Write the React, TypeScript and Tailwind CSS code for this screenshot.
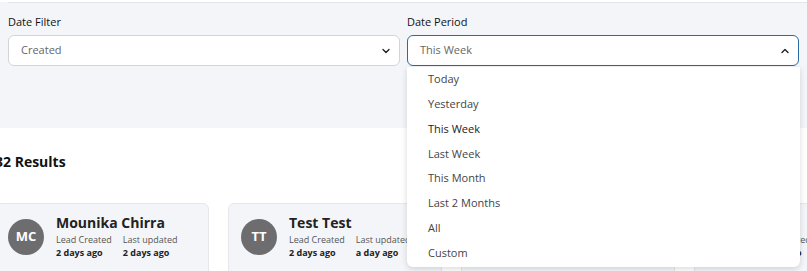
import React from 'react';
import { ChevronDown, ChevronUp } from 'lucide-react';

interface Lead {
  initials: string;
  name: string;
  created: string;
  updated: string;
}

const leads: Lead[] = [
  { initials: 'MC', name: 'Mounika Chirra', created: '2 days ago', updated: '2 days ago' },
  { initials: 'TT', name: 'Test Test', created: '2 days ago', updated: 'a day ago' },
  { initials: 'AK', name: 'Anil Kumar', created: '3 days ago', updated: '3 days ago' },
  { initials: 'RE', name: 'Renee', created: '3 days ago', updated: '2 days ago' },
];

const periods = ['Today', 'Yesterday', 'This Week', 'Last Week', 'This Month', 'Last 2 Months', 'All', 'Custom'];

const LeadCard = ({ lead }: { lead: Lead }) => (
  <div className="w-[214px] h-[90px] shrink-0 rounded-[6px] border border-[#e6e7eb] bg-[#f4f5f8] flex items-start gap-[12px] pl-[12px] pt-[9px]">
    <div className="w-[36px] h-[36px] mt-[6px] rounded-full bg-[#6d6d70] text-white text-[13px] font-bold flex items-center justify-center">
      {lead.initials}
    </div>
    <div className="flex flex-col">
      <span className="text-[14px] font-bold leading-[20px] text-[#222]">{lead.name}</span>
      <div className="flex gap-[11px]">
        <div className="flex flex-col">
          <span className="text-[9px] leading-[13px] text-[#555]">Lead Created</span>
          <span className="text-[9px] leading-[13px] font-bold text-[#222]">{lead.created}</span>
        </div>
        <div className="flex flex-col">
          <span className="text-[9px] leading-[13px] text-[#555]">Last updated</span>
          <span className="text-[9px] leading-[13px] font-bold text-[#222]">{lead.updated}</span>
        </div>
      </div>
    </div>
  </div>
);

const App = () => {
  return (
    <div className="relative w-[807px] h-[271px] overflow-hidden bg-white font-['Open_Sans',sans-serif]">
      {/* Filters */}
      <div className="h-[126px] bg-[#f4f5f8] pl-2 pr-2">
        <div className="mt-[2px] mr-[-8px] h-px bg-[#e3e4e9]" />
        <div className="grid grid-cols-2 gap-[7px] mt-[11px]">
          <div className="flex flex-col">
            <label className="text-[11px] leading-[16px] text-[#111]">Date Filter</label>
            <div className="mt-[5px] h-[31px] rounded-[6px] border border-[#d3d4d8] bg-white flex items-center justify-between pl-[12px] pr-[7px]">
              <span className="text-[11px] text-[#666]">Created</span>
              <ChevronDown size={12} strokeWidth={2.8} className="text-[#222]" />
            </div>
          </div>
          <div className="relative flex flex-col">
            <label className="text-[11px] leading-[16px] text-[#111]">Date Period</label>
            <div className="mt-[5px] h-[31px] rounded-[6px] border border-[#2a6aa6] bg-white flex items-center justify-between pl-[12px] pr-[7px]">
              <span className="text-[11px] text-[#666]">This Week</span>
              <ChevronUp size={12} strokeWidth={2.8} className="text-[#222]" />
            </div>
            <ul className="absolute z-10 left-0 top-[53px] w-[393px] h-[200px] bg-white rounded-b-[6px] shadow-[0_2px_6px_rgba(0,0,0,0.15)] flex flex-col">
              {periods.map((p) => (
                <li
                  key={p}
                  className={`h-[24.8px] flex items-center pl-[21px] text-[11px] ${
                    p === 'This Week' ? 'text-[#222] font-medium' : 'text-[#444]'
                  }`}
                >
                  {p}
                </li>
              ))}
            </ul>
          </div>
        </div>
      </div>

      {/* Results */}
      <div className="ml-[-5px]">
        <h2 className="mt-[24px] text-[14px] leading-[20px] font-bold text-[#111]">32 Results</h2>
        <div className="flex gap-[19px] mt-[31px]">
          {leads.map((l) => (
            <LeadCard key={l.initials} lead={l} />
          ))}
        </div>
      </div>
    </div>
  );
};

export default App;
